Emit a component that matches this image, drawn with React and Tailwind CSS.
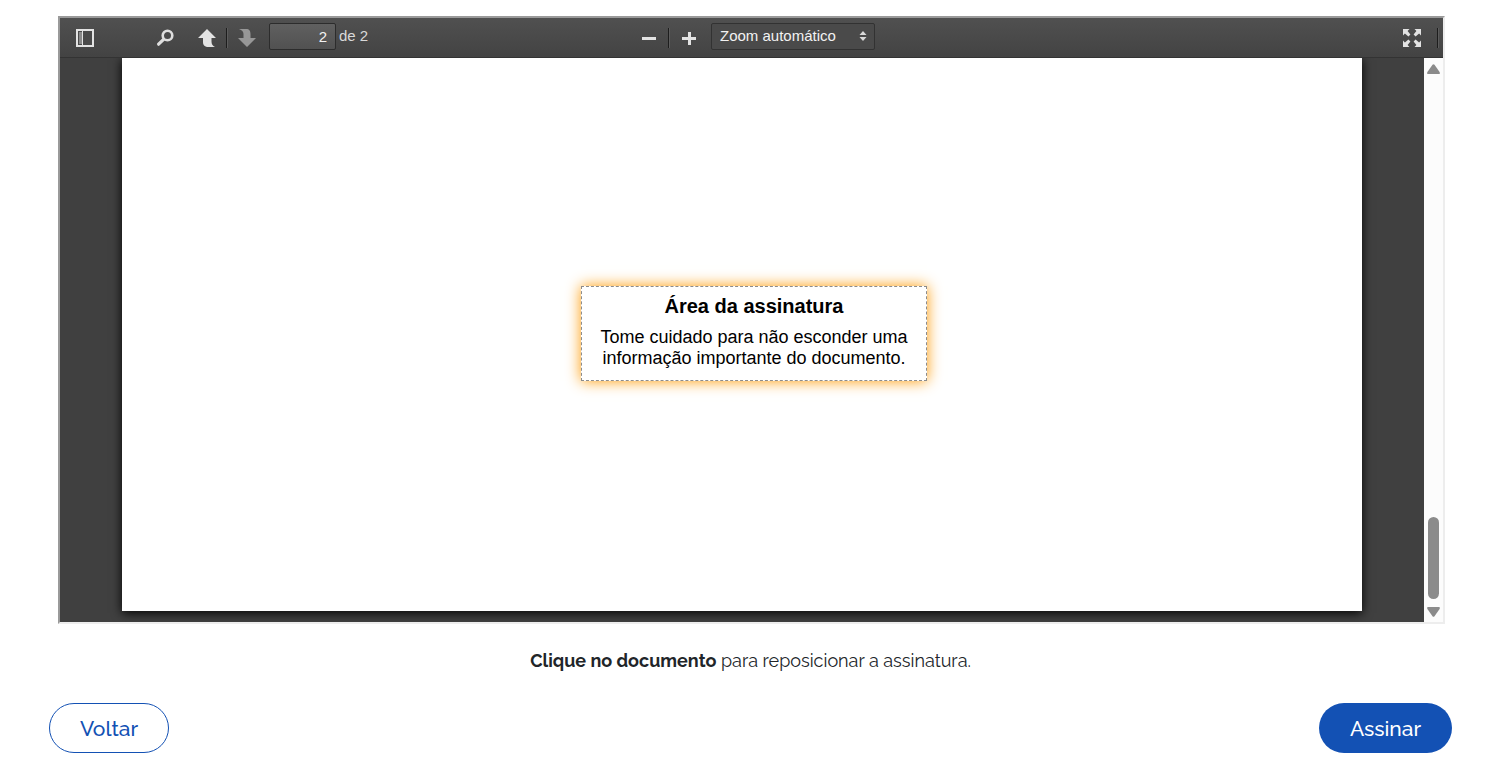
import React, { useState } from 'react';

const SidebarIcon = () => (
  <svg width="18" height="18" viewBox="0 0 18 18" aria-hidden="true">
    <rect x="1" y="1" width="16" height="16" fill="#4a4a4a" stroke="#e3e3e3" strokeWidth="2" />
    <rect x="3" y="3" width="3" height="12" fill="#8a8a8a" />
    <rect x="6" y="2" width="1" height="14" fill="#e3e3e3" />
  </svg>
);

const SearchIcon = () => (
  <svg width="18" height="18" viewBox="0 0 18 18" fill="none" stroke="#dedede" aria-hidden="true">
    <circle cx="11.5" cy="6.5" r="4.8" strokeWidth="2.6" />
    <path d="M7.6 10.4L2.6 15.2" strokeWidth="3.2" strokeLinecap="round" />
  </svg>
);

const ArrowIcon = ({ down, color }) => (
  <svg width="18" height="18" viewBox="0 0 18 18" fill={color} aria-hidden="true">
    {down ? (
      <path d="M1 0H8C11.5 0 12.5 2 12.5 5V9H18L9 18L0 9H5.5V5C5.5 2.6 4 1.4 1 0Z" />
    ) : (
      <path d="M9 0L18 9H13.5V12.5C13.5 15 14.5 17 17 18H10.5C7 18 5 16.2 5 13V9H0Z" />
    )}
  </svg>
);

const FullscreenIcon = () => (
  <svg width="18" height="18" viewBox="0 0 18 18" fill="#e3e3e3" aria-hidden="true">
    <path d="M0 0H6.5L4.6 1.9L7.4 5.4L5.4 7.4L1.9 4.6L0 6.5Z" />
    <path d="M18 0V6.5L16.1 4.6L12.6 7.4L10.6 5.4L13.4 1.9L11.5 0Z" />
    <path d="M0 18V11.5L1.9 13.4L5.4 10.6L7.4 12.6L4.6 16.1L6.5 18Z" />
    <path d="M18 18H11.5L13.4 16.1L10.6 12.6L12.6 10.6L16.1 13.4L18 11.5Z" />
  </svg>
);

const ToolButton = ({ label, children, ...props }) => (
  <button
    type="button"
    aria-label={label}
    className="flex h-7 w-8 items-center justify-center rounded-xs"
    {...props}
  >
    {children}
  </button>
);

const Separator = () => (
  <span className="h-5 w-[2px] border-r border-[#5c5c5c] bg-[#1d1d1d]" />
);

const Toolbar = ({ page, setPage }) => (
  <div className="grid h-10 grid-cols-[1fr_auto_1fr] items-center border-b border-[#333] bg-linear-to-b from-[#505050] to-[#434343] text-[15px] text-[#d9d9d9]">
    <div className="flex items-center pl-[9px]">
      <ToolButton label="Exibir painel">
        <SidebarIcon />
      </ToolButton>
      <div className="ml-12 flex items-center">
        <ToolButton label="Localizar">
          <SearchIcon />
        </ToolButton>
        <div className="ml-[10px] flex items-center">
          <ToolButton label="Página anterior" onClick={() => setPage('1')}>
            <ArrowIcon color="#e3e3e3" />
          </ToolButton>
          <span className="flex px-[3px]">
            <Separator />
          </span>
          <ToolButton label="Próxima página" disabled>
            <ArrowIcon down color="#979797" />
          </ToolButton>
        </div>
        <label className="ml-[6px] flex items-center gap-[3px] pb-[2px]">
          <input
            type="text"
            aria-label="Página"
            value={page}
            onChange={(e) => setPage(e.target.value)}
            className="h-[27px] w-[67px] rounded-xs border border-[#2c2c2c] bg-linear-to-b from-[#606060] to-[#515151] px-2 text-right text-[#f2f2f2]"
          />
          de 2
        </label>
      </div>
    </div>

    <div className="flex items-center pl-[5px]">
      <ToolButton label="Reduzir">
        <svg width="14" height="14" viewBox="0 0 14 14" fill="#e3e3e3" aria-hidden="true">
          <rect y="6" width="14" height="3" />
        </svg>
      </ToolButton>
      <span className="flex px-[3px]">
        <Separator />
      </span>
      <ToolButton label="Ampliar">
        <svg width="14" height="14" viewBox="0 0 14 14" fill="#e3e3e3" aria-hidden="true">
          <rect y="6" width="14" height="3" />
          <rect x="6" y="1" width="3" height="13" />
        </svg>
      </ToolButton>
      <div className="relative ml-[6px] pb-[2px]">
        <select
          aria-label="Zoom"
          className="h-[27px] w-[164px] appearance-none rounded-xs border border-[#323232] bg-[#4a4a4a] pr-6 pl-2 text-[#f2f2f2]"
        >
          <option>Zoom automático</option>
          <option>Tamanho real</option>
          <option>100%</option>
        </select>
        <svg
          className="pointer-events-none absolute top-2 right-2"
          width="8"
          height="10"
          viewBox="0 0 8 10"
          fill="#d9d9d9"
          aria-hidden="true"
        >
          <path d="M4 0L7.5 4H0.5Z" />
          <path d="M4 10L0.5 6H7.5Z" />
        </svg>
      </div>
    </div>

    <div className="flex items-center justify-end gap-[9px] pr-1">
      <ToolButton label="Tela cheia">
        <FullscreenIcon />
      </ToolButton>
      <Separator />
    </div>
  </div>
);

const Scrollbar = () => (
  <div className="flex w-[19px] flex-col items-center bg-[#fcfcfc] pt-[6px] pb-[5px]">
    <svg width="13" height="10" viewBox="0 0 13 10" fill="#8b8b8b" aria-hidden="true">
      <path d="M5.5 0.7Q6.5 -0.4 7.5 0.7L12.6 8Q13.3 10 12 10H1Q-0.3 10 0.4 8Z" />
    </svg>
    <div className="mt-auto mb-2 h-[82px] w-[11px] rounded-full bg-[#8b8b8b]" />
    <svg width="13" height="10" viewBox="0 0 13 10" fill="#8b8b8b" aria-hidden="true">
      <path d="M5.5 9.3Q6.5 10.4 7.5 9.3L12.6 2Q13.3 0 12 0H1Q-0.3 0 0.4 2Z" />
    </svg>
  </div>
);

const SignatureArea = () => (
  <div className="absolute top-[228px] left-[459px] h-[95px] w-[346px] border border-dashed border-[#8c8c8c] bg-white pt-1 text-center text-black shadow-[0_0_14px_#ff9900]">
    <h2 className="text-[20px] leading-[30px] font-bold">Área da assinatura</h2>
    <p className="mt-[6px] text-[18px] leading-[21px]">
      Tome cuidado para não esconder uma
      <br />
      informação importante do documento.
    </p>
  </div>
);

const App = () => {
  const [page, setPage] = useState('2');

  return (
    <div className="flex min-h-screen flex-col bg-white pt-4 pr-[35px] pb-[13px] pl-[49px] font-['Raleway','Lato',sans-serif]">
      <section className="mr-[7px] ml-[9px] flex flex-1 flex-col border-2 border-t-[#9a9a9a] border-r-[#ededed] border-b-[#ededed] border-l-[#9a9a9a] font-['Liberation_Sans',Arial,sans-serif]">
        <Toolbar page={page} setPage={setPage} />
        <div className="flex min-h-[400px] flex-1">
          <div className="flex flex-1 overflow-hidden bg-[#404040] px-[62px] pb-[11px]">
            <div className="relative flex-1 bg-white shadow-[0_2px_10px_#000]">
              <SignatureArea />
            </div>
          </div>
          <Scrollbar />
        </div>
      </section>

      <p className="mt-6 text-center text-[18px] leading-[26px] text-[#212529]">
        <strong className="font-bold">Clique no documento</strong> para reposicionar a assinatura.
      </p>

      <div className="mt-[29px] flex justify-between text-[21px] font-medium">
        <button
          type="button"
          className="h-[50px] w-[120px] rounded-full border border-[#1351b4] pt-px text-[#1351b4]"
        >
          Voltar
        </button>
        <button
          type="button"
          className="h-[50px] w-[133px] rounded-full bg-[#1351b4] pt-px text-white"
        >
          Assinar
        </button>
      </div>
    </div>
  );
};

export default App;
